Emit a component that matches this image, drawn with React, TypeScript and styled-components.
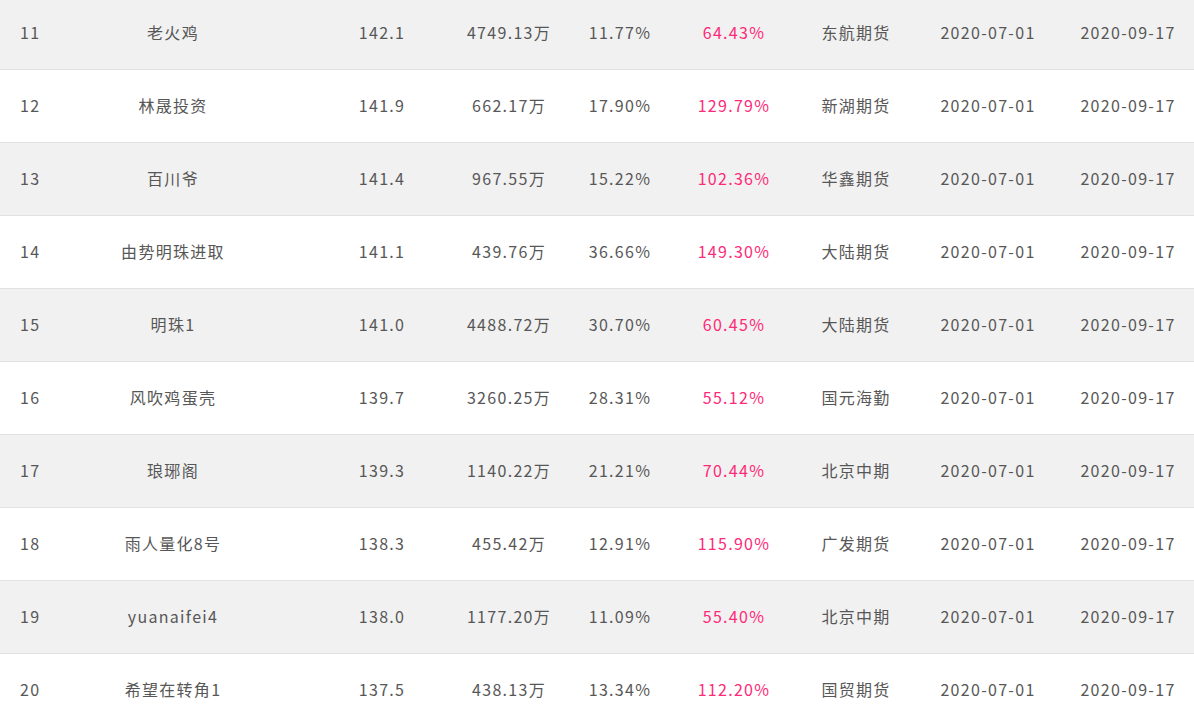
import React from 'react';
import styled, { createGlobalStyle } from 'styled-components';

const GlobalStyle = createGlobalStyle`
  html, body {
    margin: 0;
    padding: 0;
    background: #ffffff;
    overflow: hidden;
  }
  body {
    font-family: "Noto Sans CJK SC", "Noto Sans", sans-serif;
  }
`;

const Table = styled.div`
  width: 1194px;
  margin-top: -3px;
  display: flex;
  flex-direction: column;
`;

const Row = styled.div<{ $shaded: boolean }>`
  display: flex;
  height: 72px;
  border-bottom: 1px solid #e2e2e6;
  background: ${(p) => (p.$shaded ? '#f1f1f1' : '#ffffff')};
`;

const Cell = styled.div<{ $w: number; $pink?: boolean; $left?: boolean }>`
  flex: 0 0 ${(p) => p.$w}px;
  min-width: 0;
  display: flex;
  align-items: center;
  justify-content: ${(p) => (p.$left ? 'flex-start' : 'center')};
  padding-left: ${(p) => (p.$left ? '20px' : '0')};
  padding-bottom: 2px;
  box-sizing: border-box;
  white-space: nowrap;
  font-size: 16px;
  letter-spacing: 1.3px;
  color: ${(p) => (p.$pink ? '#fd2a78' : '#575757')};
`;

// widths chosen so each column's text centre lands where the original table has it
const widths = [30, 286, 132, 122, 100, 128, 116, 148, 132];

const rows = [
  ['11', '老火鸡', '142.1', '4749.13万', '11.77%', '64.43%', '东航期货'],
  ['12', '林晟投资', '141.9', '662.17万', '17.90%', '129.79%', '新湖期货'],
  ['13', '百川爷', '141.4', '967.55万', '15.22%', '102.36%', '华鑫期货'],
  ['14', '由势明珠进取', '141.1', '439.76万', '36.66%', '149.30%', '大陆期货'],
  ['15', '明珠1', '141.0', '4488.72万', '30.70%', '60.45%', '大陆期货'],
  ['16', '风吹鸡蛋壳', '139.7', '3260.25万', '28.31%', '55.12%', '国元海勤'],
  ['17', '琅琊阁', '139.3', '1140.22万', '21.21%', '70.44%', '北京中期'],
  ['18', '雨人量化8号', '138.3', '455.42万', '12.91%', '115.90%', '广发期货'],
  ['19', 'yuanaifei4', '138.0', '1177.20万', '11.09%', '55.40%', '北京中期'],
  ['20', '希望在转角1', '137.5', '438.13万', '13.34%', '112.20%', '国贸期货'],
];

export default function App() {
  return (
    <>
      <GlobalStyle />
      <Table>
        {rows.map((r, i) => {
          const cells = [...r, '2020-07-01', '2020-09-17'];
          return (
            <Row key={r[0]} $shaded={i % 2 === 0}>
              {cells.map((c, j) => (
                <Cell key={j} $w={widths[j]} $left={j === 0} $pink={j === 5}>
                  {c}
                </Cell>
              ))}
            </Row>
          );
        })}
      </Table>
    </>
  );
}
